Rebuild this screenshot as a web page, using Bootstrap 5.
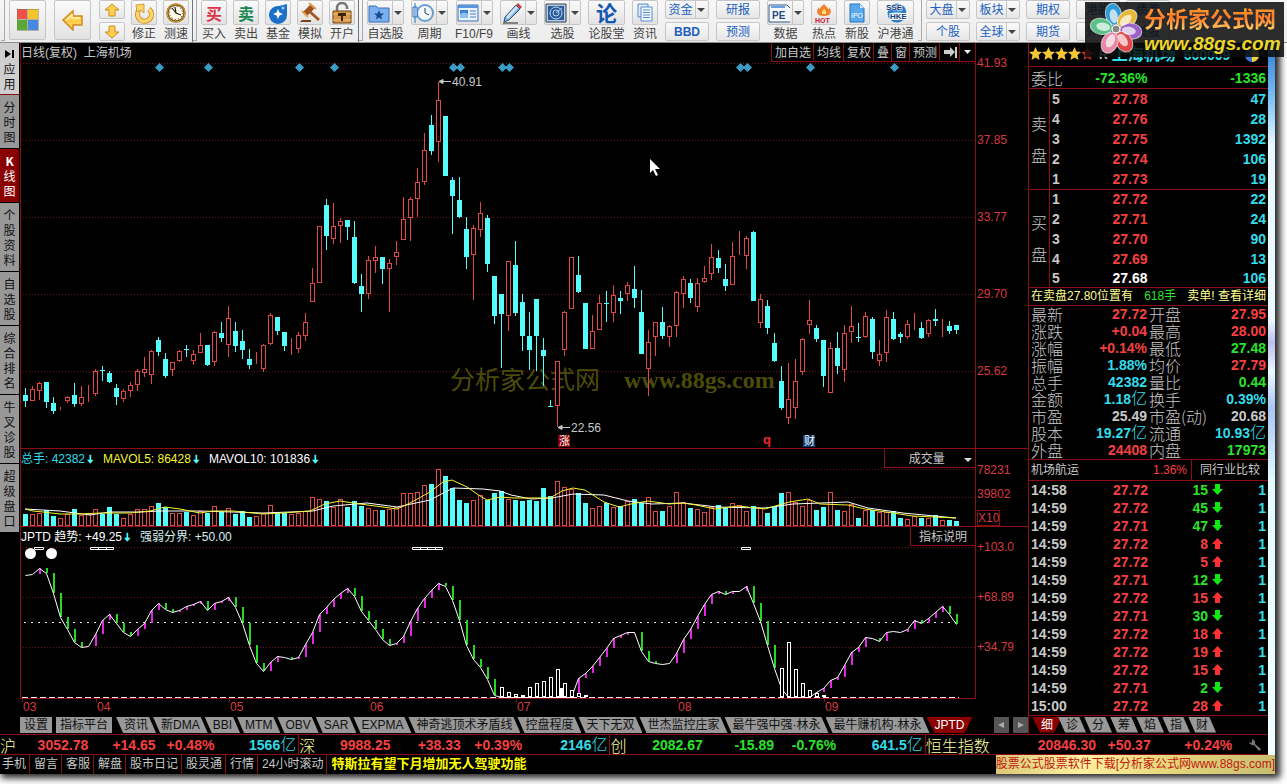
<!DOCTYPE html>
<html lang="zh-CN">
<head>
<meta charset="utf-8">
<meta name="viewport" content="width=device-width, initial-scale=1">
<title>上海机场 600009 日线</title>
<link href="https://cdn.jsdelivr.net/npm/bootstrap@5.3.0/dist/css/bootstrap.min.css" rel="stylesheet">
<style>
:root{--ln:#8c0e12;--up:#f54040;--dn:#2be32b;--cy:#33dcea;--gr:#c8c8c8}
body{font:12px/16px "Liberation Sans","Noto Sans CJK SC",sans-serif;background:#fff;color:var(--gr);overflow-x:hidden}
button{font:inherit;color:inherit;border:0;background:none;padding:0}
a{color:inherit;text-decoration:none}
svg{display:block}
/* toolbar */
.toolbar{height:43px;background:linear-gradient(#f7f7f7,#ececec);border-bottom:1px solid #8d8d8d;color:#444;overflow:hidden;white-space:nowrap;padding-left:1px}
.tb{border:1px solid #c6c6c6;border-radius:2px;background:linear-gradient(#fafafa,#e2e2e2);height:25px;width:26px;display:flex;align-items:center;justify-content:center;line-height:1}
.tb.wide{width:37px}
.tb.big{width:37px;height:40px}
.tb.half{height:18px}
.tool{display:flex;flex-direction:column;align-items:center;line-height:16px}
.tool .tb{margin-bottom:1px}
.tool .glyph{font:bold 16px/1 "Noto Sans CJK SC",sans-serif}
.tool .glyph.xl{font-size:21px;color:#1458b4}
.pair{display:flex;flex-direction:column;gap:3px}
.pair button{border:1px solid #c6c6c6;border-radius:2px;background:linear-gradient(#fafafa,#e6e6e6);width:44px;height:19px;line-height:16px;color:#1c60c0;display:flex;align-items:center;justify-content:center}
.pair .half{width:26px}
.car{border:4px solid transparent;border-top-color:#444;border-bottom:0;width:0;height:0}
.cell-car{border-left:1px solid #c6c6c6;align-self:stretch;display:flex;align-items:center;padding:0 1px;margin-left:2px}
.grip{width:4px;height:41px;border-right:1px solid #aaa;border-bottom:1px solid #aaa}
.banner{position:absolute;z-index:5;right:3px;top:2px;width:199px;height:55px;background:rgba(12,12,12,.86);padding-left:3px}
.banner b{display:block;padding-top:5px;font-size:22px;line-height:26px;background:linear-gradient(#ffb030,#ff7a28 50%,#ffe070);-webkit-background-clip:text;color:transparent}
.banner i{display:block;font:italic bold 19px/22px "Liberation Sans",sans-serif;color:#ecd62c}
/* frame */
.frame{background:#000;border:0 solid;border-image:linear-gradient(#2a78d8,#7fc4f6 8%,#e8f8fe 14%,#eaf9fe 38%,#b9c0f0 41%,#eaf9fe 45%,#a9c6f4 50%,#e2fbfe 60%,#f2ffff) 1;border-width:0 7px 0 0;margin-right:12px;box-shadow:3px 2px 7px 2px #222}
.side{width:20px;padding-right:1px;flex:none;font-family:"Noto Sans CJK SC",sans-serif}
.side a{display:block;background:#989898;color:#111;padding:4px 3px;line-height:15px;text-align:center;border-bottom:1px solid #000;word-break:break-all}
.side a.app{background:#cfcfcf;padding:3px;border-bottom-color:var(--ln)}
.side a.on{background:#8a0000;color:#fff}
.bl{border:0 solid var(--ln)}
.chart{border:0 solid var(--ln);border-width:0 1px}
.axis{width:52px;flex:none;color:#d83a40;padding-left:1px}
.hd{height:19px;line-height:20px}
.hd button{border-left:1px solid var(--ln);border-bottom:1px solid var(--ln);padding:0 2px 0 3px}
.cut{border-bottom:1px solid var(--ln)}
.x10{border:1px solid var(--ln);line-height:14px;width:23px}
.dnarrow{color:#54fcfc;font-weight:bold;margin:0 1px 0 2px}
/* quote panel */
.quote{width:240px;flex:none;border-left:1px solid var(--ln)}
.quote table{width:100%;border-collapse:collapse}
.quote td,.quote th{padding:0 2px}
.n{font:bold 14px/16px "Liberation Sans","Noto Sans CJK SC",sans-serif;text-align:right}
.yi{font-size:16px;font-weight:300;line-height:16px}
.lab{font-size:16px;font-family:"Noto Sans CJK SC",sans-serif;font-weight:300!important;white-space:nowrap}
.book tr{height:20px}.book td,.book th{line-height:18px!important}
.book .side-lab{width:18px;white-space:normal;line-height:32px!important;border-right:1px solid var(--ln)}
.stats tr{height:17px}.stats td,.stats th{line-height:17px!important}
.ticks tr{height:18px}
.u{color:var(--up)}.d{color:var(--dn)}.c{color:var(--cy)}.w{color:#fff}.g{color:var(--gr)}
.tip{color:#ffff90;height:18px;line-height:17px}
/* tab strips */
.tabs{height:18px;padding-top:1px}
.tabs button{background:#989898;color:#111;line-height:16px;height:16px;white-space:nowrap}
.tabs .sl{padding:0 8px;margin-right:-3px;clip-path:polygon(0 0,calc(100% - 7px) 0,100% 100%,7px 100%)}
.quote .tabs .sl{margin-right:-2px}
.tabs .on{background:#8a0000;color:#fff;clip-path:polygon(0 0,100% 0,calc(100% - 8px) 100%,8px 100%)}
.quote .tabs .on{padding:0 9px;margin-right:-4px}
.indices{display:grid;grid-template-columns:299fr 311fr 315fr 342fr;border:solid var(--ln);border-width:1px 0;height:21px}
.seg{display:grid;grid-template-columns:16px 75fr 70fr 61fr 85fr;border-right:1px solid var(--ln);align-items:center;padding-right:2px}
.seg.hk{grid-template-columns:64px 107fr 55fr 82fr 34fr;border:0}
.nm{font-size:16px;color:#ffffa0;white-space:nowrap;font-family:"Noto Sans CJK SC",sans-serif;font-weight:300}
.foot a{border-right:1px solid var(--ln);padding:0 3px 0 4px;line-height:18px;white-space:nowrap}
.foot a:first-child{padding-left:2px}
.news{color:#ff0;font-weight:bold;font-size:13px;padding-left:4px;line-height:18px}
.ad{background:linear-gradient(90deg,#d8c878,#fff0a0 30%,#e8d87c 60%,#c6bd70);color:#c01810;margin-right:-7px;line-height:19px!important;z-index:2}
.tail{height:12px}
.pointer{position:absolute;left:629px;top:115px}
.stage{position:relative}
</style>
</head>
<body>
<header class="toolbar d-flex position-relative">
  <div class="grip me-1" aria-hidden="true"></div>
  <button class="tb big" aria-label="首页"><svg width="22" height="22"><path fill="#f05048" d="M0 0h10v10H0z"/><path fill="#f5c52c" d="M11 0h10v10H11z"/><path fill="#58a838" d="M0 11h10v10H0z"/><path fill="#4888e0" d="M11 11h10v10H11z"/><path d="M0 .5h21.500v21H.5V0M10.500 0v21M0 10.500h21" fill="none" stroke="#775" opacity=".5"/></svg></button>
  <button class="tb big ms-2" aria-label="返回"><svg width="24" height="22"><path d="M2 11 12 2v5h9v9h-9v5z" fill="#ffd050" stroke="#d08a20" stroke-width="1.500"/><path d="M5 11l6-5v3h8" fill="none" stroke="#fff3b0" stroke-width="1.500"/></svg></button>
  <div class="pair ms-2"><button class="half" aria-label="上"><svg width="18" height="14"><path d="M9 1l7 6h-4v6H6V7H2z" fill="#ffd050" stroke="#d08a20"/></svg></button><button class="half" aria-label="下"><svg width="18" height="14"><path d="M9 13l7-6h-4V1H6v6H2z" fill="#ffd050" stroke="#d08a20"/></svg></button></div>
  <div class="d-flex" style="gap:6px;margin-left:6px">
    <div class="tool"><button class="tb" aria-label="修正"><svg width="22" height="22"><path d="M6 8a7 7 0 1 0 10-1" fill="none" stroke="#c88a20" stroke-width="5"/><path d="M6 8a7 7 0 1 0 10-1" fill="none" stroke="#ffd468" stroke-width="3.500"/><path d="M3 3l8-1v9L8 8l-4 2z" fill="#ffd468" stroke="#c88a20" stroke-width=".8"/></svg></button>修正</div>
    <div class="tool"><button class="tb" aria-label="测速"><svg width="22" height="22"><circle cx="11" cy="11" r="8.500" fill="#fffbe8" stroke="#8a5c18" stroke-width="2.500"/><circle cx="11" cy="11" r="9" fill="none" stroke="#e0b850" stroke-width=".8"/><path d="M10 5l1 6 5 2M11 11 7 6" fill="none" stroke="#222" stroke-width="1.200"/><circle cx="11" cy="11" r="6.500" fill="none" stroke="#333" stroke-dasharray="1 2.400"/></svg></button>测速</div>
  </div>
  <div class="border-end border-secondary" style="margin-left:3px"></div><div class="grip me-1"></div>
  <div class="d-flex" style="gap:6px">
    <div class="tool"><button class="tb glyph text-danger">买</button>买入</div>
    <div class="tool"><button class="tb glyph text-success">卖</button>卖出</div>
    <div class="tool"><button class="tb" aria-label="基金"><svg width="22" height="22"><path d="M20 2v11a9 9 0 1 1-8-9z" fill="#1c70c8"/><path d="M11 7l1.500 3.500L16 12l-3.500 1.500L11 17l-1.500-3.500L6 12l3.500-1.500z" fill="#fff"/><circle cx="16" cy="6" r="1.500" fill="#9cf"/></svg></button>基金</div>
    <div class="tool"><button class="tb" aria-label="模拟"><svg width="22" height="22"><path d="M9 8 20 18" stroke="#a85820" stroke-width="3"/><path d="M4 10 12 2l4 4-8 8z" fill="#a05024"/><path d="M3 9l6 6M10 1l7 6" stroke="#e0a050" stroke-width="2"/><path d="M1 20h11v-2H3z" fill="#7a4020"/></svg></button>模拟</div>
    <div class="tool"><button class="tb" aria-label="开户"><svg width="22" height="22"><path d="M6 10V6a5 5 0 0 1 10 0v1" fill="none" stroke="#777" stroke-width="2.500"/><path d="M2 9h18v12H2z" fill="#d89848" stroke="#6a4418"/><path d="M2 12h18M2 18h18" stroke="#f0c078"/><path d="M7 11h8v3h-3v5h-2v-5H7z" fill="#3a2408"/></svg></button>开户</div>
  </div>
  <div class="border-end border-secondary" style="margin-left:3px"></div><div class="grip me-1"></div>
  <div class="d-flex" style="gap:7px">
    <div class="tool"><button class="tb wide" aria-label="自选股"><svg width="22" height="20"><path d="M1 3h7l2 2h11v14H1z" fill="#7ab0ee" stroke="#3a70b8"/><path d="M11 7l1.400 3.400 3.600.2-2.800 2.300 1 3.600-3.200-2-3.200 2 1-3.600L6 10.600l3.600-.2z" fill="#184a90"/></svg><span class="cell-car"><span class="car"></span></span></button>自选股</div>
    <div class="tool"><button class="tb wide" aria-label="周期"><svg width="22" height="22"><circle cx="13" cy="11" r="8" fill="#f4f8fc" stroke="#6aa0d0" stroke-width="2"/><path d="M13 6v5l4 2" fill="none" stroke="#246"/><path d="M3 1v20M1 5h4v10H1z" fill="#fff" stroke="#2470c0"/></svg><span class="cell-car"><span class="car"></span></span></button>周期</div>
    <div class="tool"><button class="tb wide" aria-label="F10"><svg width="22" height="20"><path d="M1 2h20v16H1z" fill="#eaf3fd" stroke="#3a70b8"/><path d="M1 2h20v3H1z" fill="#5a94dc"/><path d="M3 7h8v8H3z" fill="#3b7fd0"/><path d="M3 11q4-3 8 0v4H3z" fill="#8cc0f4"/><path d="M13 8h6M13 11h6M13 14h6" stroke="#4a80c0"/></svg><span class="cell-car"><span class="car"></span></span></button>F10/F9</div>
    <div class="tool"><button class="tb wide" aria-label="画线"><svg width="22" height="22"><path d="M4 15 15 3l4 4L8 18l-5 2z" fill="#78b0ee" stroke="#356"/><path d="M5 15 15 4l2 2L7 17z" fill="#cfe4fa"/><path d="M15 3l2-2 4 4-2 2z" fill="#d04040"/><path d="M2 21h15" stroke="#222"/></svg><span class="cell-car"><span class="car"></span></span></button>画线</div>
    <div class="tool"><button class="tb wide" aria-label="选股"><svg width="22" height="20"><path d="M1 1h20v18H1z" fill="#b8cce0" stroke="#345"/><path d="M3 3h16v14H3z" fill="#2c5a98"/><g fill="none" stroke="#b8d8f8"><circle cx="11" cy="10" r="3"/><circle cx="11" cy="10" r="6"/><path d="M11 10l6-5"/></g></svg><span class="cell-car"><span class="car"></span></span></button>选股</div>
    <div class="tool"><button class="tb wide glyph xl">论</button>论股堂</div>
    <div class="tool"><button class="tb" aria-label="资讯"><svg width="18" height="20"><path d="M2 1h10v13H2z" fill="#dcebfa" stroke="#5a8cc8"/><path d="M5 4h11v14H5z" fill="#f2f8ff" stroke="#5a8cc8"/><path d="M7 7h7M7 9.500h7M7 12h7M7 14.500h7" stroke="#5a8cc8"/></svg></button>资讯</div>
    <div class="pair"><button>资金<span class="cell-car"><span class="car"></span></span></button><button class="fw-bold">BBD</button></div>
    <div class="pair"><button>研报</button><button>预测</button></div>
    <div class="tool"><button class="tb wide" aria-label="数据"><svg width="24" height="20"><path d="M1 2h18l4 4v13H1z" fill="#f6fafe" stroke="#345a88"/><path d="M3 4h14" stroke="#6aa0e0" stroke-width="2"/><text x="4" y="16" font-size="10" font-weight="bold" fill="#234a80">PE</text></svg><span class="cell-car"><span class="car"></span></span></button>数据</div>
    <div class="tool"><button class="tb" aria-label="热点"><svg width="20" height="22"><path d="M10 1c1 4 3 3 4 6 2 0 1-1 1-2 3 4 3 9-5 9S2 9 5 5c0 2 1 2 1 2 0-3 4-3 4-6z" fill="#f08030"/><path d="M10 6c1 3 3 3 2 6H8c-1-3 2-3 2-6z" fill="#ffe070"/><text x="1" y="21" font-size="7" font-weight="bold" fill="#d02030">HOT</text></svg></button>热点</div>
    <div class="tool"><button class="tb" aria-label="新股"><svg width="18" height="20"><path d="M2 1h10l4 4v14H2z" fill="#58a8ec" stroke="#2c74b8"/><path d="M12 1v4h4" fill="#cfe8ff"/><text x="3" y="15" font-size="7" fill="#fff">IPO</text></svg></button>新股</div>
    <div class="tool"><button class="tb wide" aria-label="沪港通"><svg width="26" height="22"><circle cx="14" cy="11" r="9.500" fill="#2a7cc8"/><path d="M5 14a10 8 0 0 1 18 0" fill="#68b0e8"/><text x="3" y="8" font-size="8" font-weight="bold" fill="#123c78" stroke="#fff" stroke-width="1" paint-order="stroke">SSE</text><text x="7" y="17" font-size="8" font-weight="bold" fill="#123c78" stroke="#fff" stroke-width="2" paint-order="stroke">HKE</text></svg></button>沪港通</div>
  </div>
  <div class="grip ms-1 me-1"></div>
  <div class="d-flex" style="gap:6px">
    <div class="pair"><button>大盘<span class="cell-car"><span class="car"></span></span></button><button>个股</button></div>
    <div class="pair"><button>板块<span class="cell-car"><span class="car"></span></span></button><button>全球<span class="cell-car"><span class="car"></span></span></button></div>
    <div class="pair"><button>期权</button><button>期货</button></div>
    <div class="pair"><button>港股</button><button>外汇</button></div>
    <div class="pair"><button>债券</button><button>美股</button></div>
  </div>
</header>
<div class="banner d-flex">
  <svg width="56" height="55" viewBox="-28 -27 56 55" class="flex-shrink-0"><g stroke="#fff" stroke-opacity=".6">
    <ellipse cy="-15" rx="8" ry="11" fill="#2f9ad8" transform="rotate(-10)"/><ellipse cy="-15" rx="8" ry="11" fill="#e8b838" transform="rotate(48)"/><ellipse cy="-15" rx="8" ry="11" fill="#9a62c8" transform="rotate(98)"/><ellipse cy="-15" rx="8" ry="11" fill="#e04848" transform="rotate(148)"/><ellipse cy="-15" rx="8" ry="11" fill="#e888a8" transform="rotate(205)"/><ellipse cy="-15" rx="8" ry="11" fill="#58c088" transform="rotate(280)"/></g>
    <g fill="#fff" opacity=".7"><ellipse cy="-13" rx="4" ry="7" transform="rotate(-10)"/><ellipse cy="-13" rx="4" ry="7" transform="rotate(48)"/><ellipse cy="-13" rx="4" ry="7" transform="rotate(98)"/><ellipse cy="-13" rx="4" ry="7" transform="rotate(148)"/><ellipse cy="-13" rx="4" ry="7" transform="rotate(205)"/><ellipse cy="-13" rx="4" ry="7" transform="rotate(280)"/></g><circle r="4" fill="#888" stroke="#fff"/></svg>
  <div><b>分析家公式网</b><i>www.88gs.com</i></div>
</div>

<main class="frame">
<div class="d-flex">
  <nav class="side">
    <a href="#" class="app"><svg width="13" height="15"><path d="M2 4v8l6-4z" fill="#000"/><path d="M9 4h2v8H9z" fill="#000"/></svg>应用</a>
    <a href="#">分时图</a><a href="#" class="on"><b>K</b> 线图</a><a href="#">个股资料</a><a href="#">自选股</a><a href="#">综合排名</a><a href="#">牛叉诊股</a><a href="#">超级盘口</a>
  </nav>
  <div class="flex-grow-1" style="min-width:0">
    <section class="d-flex cut stage">
      <div class="chart flex-grow-1">
        <div class="hd d-flex"><span class="me-auto">日线(复权)&nbsp; 上海机场</span>
          <button>加自选</button><button>均线</button><button>复权</button><button>叠</button><button>窗</button><button>预测</button><button aria-label="末尾"><svg width="14" height="18"><path d="M1 7h6V4l5 5-5 5v-3H1z" fill="#ccc"/><path d="M12 4h2v11h-2z" fill="#ccc"/></svg></button><button class="px-1" aria-label="菜单"><svg width="7" height="18"><path d="M0 7h7l-3.500 4z" fill="#eee"/></svg></button></div>
        <svg id="price" width="100%" height="386" viewBox="0 0 954 386" preserveAspectRatio="xMinYMin"></svg>
      </div>
      <div class="axis d-flex flex-column" style="gap:61px;padding-top:12px"><span>41.93</span><span>37.85</span><span>33.77</span><span>29.70</span><span>25.62</span></div>
      <svg class="pointer" width="13" height="20"><path d="M1 1v14l3-3 3 6 2-1-3-6h5z" fill="#fff"/></svg>
    </section>
    <section class="d-flex cut">
      <div class="chart flex-grow-1">
        <div class="hd d-flex"><span class="c">总手: 42382<span class="dnarrow">🠇</span></span><span class="ms-2" style="color:#f4f430">MAVOL5: 86428<span class="dnarrow">🠇</span></span><span class="ms-2 w me-auto">MAVOL10: 101836<span class="dnarrow">🠇</span></span>
          <button class="ps-4">成交量 <svg class="d-inline ms-3" width="9" height="6"><path d="M0 1h8L4 5z" fill="#ddd"/></svg></button></div>
        <svg id="volume" width="100%" height="58" viewBox="0 0 954 58" preserveAspectRatio="xMinYMin"></svg>
      </div>
      <div class="axis d-flex flex-column justify-content-between" style="padding-top:13px"><span>78231</span><span>39802</span><span class="x10">X10</span></div>
    </section>
    <section class="d-flex">
      <div class="chart flex-grow-1">
        <div class="hd d-flex"><span class="w me-2">JPTD 趋势: +49.25<span class="dnarrow">🠇</span></span><span class="me-auto" style="color:#d8f0f0">强弱分界: +50.00</span><button class="px-2">指标说明</button></div>
        <svg id="trend" width="100%" height="153" viewBox="0 0 954 153" preserveAspectRatio="xMinYMin"></svg>
      </div>
      <div class="axis d-flex flex-column" style="gap:34px;padding-top:12px"><span>+103.0</span><span>+68.89</span><span>+34.79</span></div>
    </section>
    <svg id="months" class="axis w-100" height="17" fill="#d83a40"></svg>
    <div class="tabs d-flex">
      <button class="px-1 me-1">设置</button><button class="px-1 me-1">指标平台</button>
      <button class="sl">资讯</button><button class="sl">新DMA</button><button class="sl">BBI</button><button class="sl">MTM</button><button class="sl">OBV</button><button class="sl">SAR</button><button class="sl">EXPMA</button><button class="sl">神奇逃顶术矛盾线</button><button class="sl">控盘程度</button><button class="sl">天下无双</button><button class="sl">世杰监控庄家</button><button class="sl">最牛强中强·林永</button><button class="sl">最牛赚机构·林永</button><button class="on px-2">JPTD</button>
      <button class="ms-auto me-1" style="width:15px;background:#555" aria-label="左移"><svg width="15" height="16"><path d="M4 8l6-3v6z" fill="#aaa"/></svg></button><button style="width:15px;background:#555" aria-label="右移"><svg width="15" height="16"><path d="M11 8 5 5v6z" fill="#aaa"/></svg></button>
    </div>
  </div>
  <aside class="quote">
    <div class="d-flex align-items-center cut" style="height:24px">
      <svg width="66" height="16" class="flex-shrink-0" id="stars"></svg>
      <b class="ms-1 g">R</b><b class="ms-1 c" style="font-size:16px">上海机场</b><b class="ms-2 c" style="font-size:14px">600009</b>
      <svg class="ms-auto me-2" width="16" height="16"><circle cx="8" cy="8" r="7" fill="#3c74d0"/><path d="M8 1a7 7 0 0 1 0 14z" fill="#f0d040"/></svg>
    </div>
    <div class="cut d-flex align-items-center justify-content-between" style="height:22px;padding-right:2px"><span class="lab" style="padding-left:2px;width:48px">委比</span><span class="n d" style="width:70px">-72.36%</span><span class="n d" style="width:118px">-1336</span></div>
    <table class="book cut" id="book"></table>
    <div class="tip cut d-flex justify-content-between" style="padding:0 2px"><span>在卖盘27.80位置有</span><span class="d">618手</span><a href="#">卖单! 查看详细</a></div>
    <table class="stats cut" id="stats"></table>
    <div class="cut d-flex" style="height:21px;line-height:20px"><span class="me-auto" style="padding-left:2px">机场航运</span><span class="u pe-1">1.36%</span><button class="border-start px-2" style="border-color:var(--ln)!important">同行业比较</button></div>
    <table class="ticks cut" id="ticks"></table>
    <div class="tabs d-flex" style="padding-left:3px"><button class="on">细</button><button class="sl">诊</button><button class="sl">分</button><button class="sl">筹</button><button class="sl">焰</button><button class="sl">指</button><button class="sl">财</button></div>
  </aside>
</div>
<div class="indices">
  <div class="seg"><span class="nm">沪</span><span class="n u">3052.78</span><span class="n u">+14.65</span><span class="n u">+0.48%</span><span class="n c">1566<span class="yi">亿</span></span></div>
  <div class="seg"><span class="nm">深</span><span class="n u">9988.25</span><span class="n u">+38.33</span><span class="n u">+0.39%</span><span class="n c">2146<span class="yi">亿</span></span></div>
  <div class="seg"><span class="nm">创</span><span class="n d">2082.67</span><span class="n d">-15.89</span><span class="n d">-0.76%</span><span class="n c">641.5<span class="yi">亿</span></span></div>
  <div class="seg hk"><span class="nm">恒生指数</span><span class="n u">20846.30</span><span class="n u">+50.37</span><span class="n u">+0.24%</span><svg class="ms-auto me-1" width="14" height="14"><path d="M1 4a4 4 0 0 0 5 3l5 6 2-2-6-5a4 4 0 0 0-3-5v3L3 5z" fill="#777"/></svg></div>
</div>
<div class="foot d-flex">
  <a href="#">手机</a><a href="#">留言</a><a href="#">客服</a><a href="#">解盘</a><a href="#">股市日记</a><a href="#">股灵通</a><a href="#">行情</a><a href="#">24小时滚动</a>
  <span class="news me-auto">特斯拉有望下月增加无人驾驶功能</span>
  <a href="#" class="ad border-0 px-0">股票公式股票软件下载[分析家公式网www.88gs.com]</a>
</div>
</main>
<div class="tail"></div>

<script src="https://cdn.jsdelivr.net/npm/bootstrap@5.3.0/dist/js/bootstrap.bundle.min.js"></script>
<script>
const CY='#54fcfc', RD='#e04848', $=id=>document.getElementById(id);
const third=v=>Math.round(v/3);
const grid=ys=>ys.map(y=>`<path d="M2 ${y}.5H954" stroke="#6a1414" stroke-dasharray="1 2"/>`).join('');
// each candle: kind, high, body top, body bottom, low (three units per pixel)
const candles=`c985,1005,1023,1040 r979,988,1022,1022 r966,970,992,1019 c966,966,1026,1043 c1012,1029,1052,1061 r1042,1051,1051,1051 r1008,1010,1023,1029 c969,1005,1032,1041 r979,1012,1031,1038 r976,1004,1006,1025
r927,933,1001,1008 c918,930,932,962 c933,939,966,969 c972,984,1011,1035 r987,993,1017,1025 r966,976,992,1010 r927,934,974,992 r891,928,938,952 r870,874,944,971 c831,840,876,888
c879,897,948,954 r905,907,930,947 r870,874,902,905 c855,867,869,890 r870,882,902,914 r819,856,878,878 c855,855,915,918 r813,817,905,917 c786,819,834,846 r738,775,854,890
c786,813,858,876 c810,843,870,897 c867,897,915,927 r876,894,896,912 r852,856,927,935 r759,766,852,854 c771,771,813,825 c816,816,858,873 r834,858,860,884 r817,825,866,878
r759,787,827,843 r625,670,725,725 r498,499,668,668 c417,435,528,570 r429,499,536,551 r474,482,497,548 c480,480,501,540 c483,531,669,672 c642,678,702,756 r588,601,701,716
r558,592,602,638 c591,591,627,672 r598,610,626,756 r543,577,590,614 r411,478,539,539 r411,418,475,543 r324,367,416,470 r220,271,365,375 c165,195,273,285 r66,121,245,305
c168,168,348,348 c351,360,408,522 c351,420,471,474 c471,507,591,627 r495,505,584,720 r426,458,509,530 c465,474,612,636 c648,648,768,792 c702,702,762,924 r603,604,767,812
c543,615,759,768 c702,726,828,873 c756,828,870,930 c717,717,828,934 c834,870,888,978 c1020,1038,1040,1040 r903,904,1037,1100 r753,755,869,887 r591,592,748,748 c588,645,696,699
c729,729,867,867 r765,814,866,866 r704,730,809,809 c693,730,732,786 r675,706,758,785 c693,714,723,762 r665,676,701,723 c618,687,714,744 c690,756,882,882 r810,847,926,1008
r786,787,832,887 c741,786,828,837 r795,799,832,860 r693,697,799,831 r648,658,701,744 c657,669,714,729 r655,670,740,755 r618,655,665,669 r551,592,641,659 c570,594,624,639
c612,657,678,693 r546,589,674,674 r513,583,584,584 r528,535,587,627 c513,516,723,723 r702,718,788,803 c720,738,804,822 c819,849,903,906 c918,963,1044,1050 r909,1018,1073,1091
r897,962,1043,1077 r833,838,937,944 r719,781,794,822 c795,804,837,846 c840,840,948,981 r846,865,998,998 c816,864,918,942 r795,820,929,966 r738,799,815,848 c789,831,833,846
r756,769,832,834 c771,777,876,897 r840,883,902,917 r750,772,878,906 c756,777,837,840 c816,822,831,849 r780,793,832,836 r759,779,781,809 c786,804,834,837 r777,780,821,830
c747,777,782,798 r777,780,782,831 c783,798,813,822 c795,795,810,822`.split(/\s+/).map(s=>[s[0],...s.slice(1).split(',').map(Number)]);
const volumes=[192,193,190,180,198,205,192,178,196,193,178,192,171,191,203,192,177,176,168,159,172,190,190,187,196,184,190,168,185,175,192,184,201,199,190,166,187,189,193,190,182,142,148,153,171,148,170,153,168,175,180,181,177,172,129,129,126,106,102,58,78,115,150,159,151,136,150,129,124,148,150,153,149,153,114,139,94,112,116,130,159,175,169,159,172,168,154,148,159,142,183,183,168,127,157,174,178,187,172,166,175,160,166,183,169,175,189,168,129,127,157,168,151,180,171,127,180,184,163,204,181,181,187,187,184,204,206,198,204,204,196,211,210,213];
const trend=[376,371,353,370,428,502,537,577,591,588,552,510,493,518,546,557,536,519,480,458,477,487,481,468,461,452,480,459,453,440,472,519,584,639,662,635,618,622,627,620,582,545,493,470,448,428,413,437,482,511,537,567,585,580,558,514,475,443,420,399,407,449,511,586,628,652,687,735,742,742,742,742,742,742,742,742,742,742,742,684,670,648,622,595,563,554,546,546,604,632,638,642,638,609,566,538,497,461,433,422,431,422,424,407,460,513,584,655,715,742,742,742,742,727,715,689,680,646,607,592,560,563,573,547,544,547,538,511,519,503,485,469,492,521];
const box=(i,top,bot,kind)=>kind==='c'
  ?`<rect x="${2+7*i}" y="${top}" width="5" height="${Math.max(1,bot-top)}" fill="${CY}"/>`
  :`<rect x="${2.5+7*i}" y="${top+.5}" width="4" height="${Math.max(0,bot-top-1)}" fill="#000" stroke="${RD}"/>`;
// price pane
let s=grid([1,78,155,232,309]);
s+=`<g fill="#4c4c08"><text x="429" y="327" font-size="25" font-family="Noto Sans CJK SC">分析家公式网</text><text x="603" y="326" font-size="24" font-weight="bold" font-family="Liberation Serif">www.88gs.com</text></g>`;
candles.forEach(([k,h,t,b,l],i)=>{const H=third(h)-2,L=third(l)-2;
  s+=`<rect x="${4+7*i}" y="${H}" width="1" height="${Math.max(1,L-H)}" fill="${k==='c'?CY:RD}"/>`+box(i,third(t)-2,third(b)-2,k)});
[159,208,299,334,453,460,502,509,740,747,810,894].forEach(x=>s+=`<path d="M${x-25} 5.5l4.500-4.500 4.500 4.500-4.500 4.500z" fill="#3c9cc8"/>`);
s+=`<g font-size="12" fill="#c8c8c8"><path d="M418 19.500h12M418 19.500l4-2v4zM537 365.500h12M537 365.500l4-2v4z" stroke="#c8c8c8"/><text x="431" y="24">40.91</text><text x="550" y="370">22.56</text></g>
<rect x="537" y="373" width="12" height="12" fill="#8a0000"/><text x="538" y="383" font-size="11" fill="#fff">涨</text>
<text x="742" y="382" font-size="13" font-weight="bold" fill="#f02828">q</text>
<rect x="782" y="373" width="12" height="12" fill="#0c3c70"/><text x="783" y="383" font-size="11" fill="#fff">财</text>`;
$('price').innerHTML=s;
// volume pane
s=grid([1,29]);
volumes.forEach((v,i)=>s+=box(i,third(v)-18,58,candles[i][0]));
s+=`<g fill="none" transform="translate(1)"><polyline stroke="#fff" points="3,41 38,43 68,47 88,44 118,44 138,43 178,43 241,45 268,44 291,43 311,38 345,35 375,39 408,32 431,20 461,21 478,23 489,27 509,31 530,30 551,26 582,27 606,33 630,36 661,35 695,39 743,40 771,36 826,34 846,40 881,45 934,50"/>
<polyline stroke="#f4f430" points="3,41 11,43 21,44 38,46 58,46 78,45 108,45 128,43 143,39 158,41 178,45 191,43 211,43 241,46 261,45 288,43 303,36 318,33 338,36 361,39 375,41 388,35 408,24 421,14 430,12 445,19 458,28 465,32 478,29 492,30 528,30 540,23 551,20 563,22 582,34 597,39 609,36 626,33 647,36 661,35 674,37 693,41 716,38 743,41 767,34 786,31 798,36 826,37 843,41 864,44 891,48 912,49 934,50"/></g>`;
$('volume').innerHTML=s;
// trend pane
const ty=v=>third(v)-96;
s=grid([1,51,101])+`<path d="M3 76.500H938" stroke="#eee" stroke-dasharray="2 5"/><path d="M1 151.500H938" stroke="#eee" stroke-dasharray="6 3"/><path d="M0 152.500H954" stroke="#8c0e12"/>`;
trend.forEach((v,i)=>{if(!i)return;const a=ty(trend[i-1]),b=ty(v);
  if(Math.abs(a-b)>1)s+=`<rect x="${4+7*i}" y="${Math.min(a,b)}" width="2" height="${Math.abs(a-b)}" fill="${b>a?'#22d822':'#e028e0'}"/>`});
s+=`<polyline fill="none" stroke="#fff" points="${trend.map((v,i)=>`${4.5+7*i},${ty(v)+.5}`).join(' ')}"/>`;
[[68,711],[69,727],[70,733],[71,736],[72,711],[73,699],[74,693],[75,681],[76,657],[77,699],[78,720],[79,730],[80,735],[108,655],[109,576],[110,657],[111,699],[112,720],[113,730],[114,735]].forEach(([i,v])=>
  s+=`<rect x="${3.5+7*i}" y="${ty(v)+.5}" width="3" height="${150-ty(v)}" fill="#000" stroke="#fff"/>`);
s+=`<path d="M538 142h4v9h-4z" fill="#fff"/><g fill="none" stroke="#fff"><path d="M13.500 1.500h9v2h-9zM69.500 1.500h23v2h-23zM77.500 1.500v2M85.500 1.500v2M391.500 1.500h30v2h-30zM399.500 1.500v2M406.500 1.500v2M414.500 1.500v2M720.500 1.500h9v2h-9z"/></g><circle cx="9.500" cy="7.500" r="5.500" fill="#fff"/><circle cx="30.500" cy="7.500" r="5.500" fill="#fff"/>`;
$('trend').innerHTML=s;
$('months').innerHTML=[[2,'03'],[76,'04'],[209,'05'],[349,'06'],[496,'07'],[657,'08'],[804,'09']].map(([x,m])=>`<path d="M${x-.5} 0v3" stroke="#8c0e12"/><text x="${x}" y="12">${m}</text>`).join('');
$('stars').innerHTML=[0,1,2,3,4].map(k=>`<path transform="translate(${13*k},0)" d="M6.500 0l2 4.500 4.500.5-3.500 3 1 5-4-2.500-4 2.500 1-5L0 5l4.500-.5z" fill="${k<4?'#f6c838':'#c82828'}"/>`).join('');
// order book
const book=[[5,'27.78',47],[4,'27.76',28],[3,'27.75',1392],[2,'27.74',106],[1,'27.73',19],[1,'27.72',22],[2,'27.71',24],[3,'27.70',90],[4,'27.69',13],[5,'27.68',106]];
$('book').innerHTML=book.map(([n,p,q],i)=>`<tr ${i==5?'style="border-top:1px solid var(--ln)"':i==9?'style="height:16px"':''}>${i%5?'':`<th rowspan="5" class="lab side-lab">${i?'买 盘':'卖 盘'}</th>`}<td class="n g" style="width:14px;text-align:left">${n}</td><td class="n ${i==9?'w':'u'}" style="width:86px">${p}</td><td class="n c">${q}</td></tr>`).join('');
const yi='<span class="yi">亿</span>';
$('stats').innerHTML=[['最新','27.72','u','开盘','27.95','u'],['涨跌','+0.04','u','最高','28.00','u'],['涨幅','+0.14%','u','最低','27.48','d'],['振幅','1.88%','c','均价','27.79','u'],['总手','42382','c','量比','0.44','d'],['金额','1.18'+yi,'c','换手','0.39%','c'],['市盈','25.49','g','市盈(动)','20.68','g'],['股本','19.27'+yi,'c','流通','10.93'+yi,'c'],['外盘','24408','u','内盘','17973','d']]
 .map(r=>`<tr><th class="lab" style="width:36px">${r[0]}</th><td class="n ${r[2]}" style="width:84px">${r[1]}</td><th class="lab" style="width:58px;padding-left:0">${r[3]}</th><td class="n ${r[5]}">${r[4]}</td></tr>`).join('');
$('ticks').innerHTML=[['14:58',2,15,0],['14:59',2,45,0],['14:59',1,47,0],['14:59',2,8,1],['14:59',2,5,1],['14:59',1,12,0],['14:59',2,15,1],['14:59',1,30,0],['14:59',2,18,1],['14:59',2,19,1],['14:59',2,15,1],['14:59',1,2,0],['15:00',2,28,1]]
 .map(([t,p,q,up])=>`<tr><td class="n g" style="width:42px;text-align:left">${t}</td><td class="n u" style="width:79px">27.7${p}</td><td class="n ${up?'u':'d'}" style="width:60px">${q}</td><td><svg width="11" height="12"><path d="${up?'M5.500 0l5.500 6H8v5H3V6H0z':'M5.500 11 11 5H8V0H3v5H0z'}" fill="${up?'#ff3030':'#10e810'}"/></svg></td><td class="n c">1</td></tr>`).join('');
</script>
</body>
</html>
